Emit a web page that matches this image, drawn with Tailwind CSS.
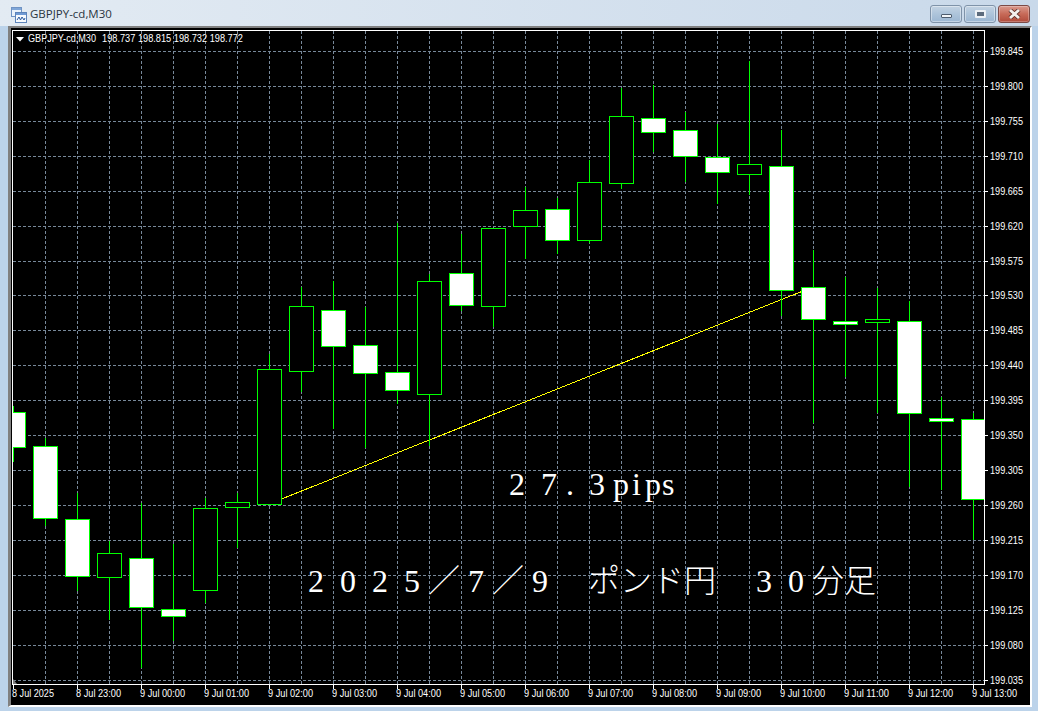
<!DOCTYPE html>
<html lang="ja">

<head>
    <meta charset="UTF-8">
    <title>GBPJPY-cd,M30</title>
    <script src="https://cdn.jsdelivr.net/npm/@tailwindcss/browser@4"></script>
</head>

<body class="bg-[#bcd3ea] overflow-hidden">

    <div class="w-[1038px] h-[711px] flex flex-col bg-[#bcd3ea]">

        <!-- Title bar -->
        <div class="h-[26px] flex items-start shrink-0 bg-gradient-to-r from-[#e3ebf3] to-[#c9d9ea]">
            <svg class="ml-[11px] mt-[7px] w-[16px] h-[16px]" viewBox="0 0 16 16">
                <rect x="0.5" y="0.5" width="10" height="9" fill="#eaf2fb" stroke="#6f93c4" />
                <rect x="1" y="1" width="9" height="2" fill="#7fa6d8" />
                <rect x="4.5" y="5.5" width="11" height="10" fill="#f7fafe" stroke="#5c83ba" />
                <rect x="5" y="6" width="10" height="2" fill="#6f9ad4" />
                <path d="M6 13 L8 10 L9.5 13 L11 10 L13 13 L14 11" fill="none" stroke="#2a5aa0" />
            </svg>
            <span class="ml-[3px] mt-[6px] text-[11.5px] leading-[16px] text-[#2a3440] font-['Open_Sans',sans-serif]">GBPJPY-cd,M30</span>

            <div class="ml-auto mr-[8px] mt-[5px] flex gap-[2px]">
                <div class="w-[32px] h-[18px] rounded-[3px] border border-[#7f93a9] bg-gradient-to-b from-[#c3d3e3] via-[#adc4da] to-[#9cb7d2] flex items-center justify-center shadow-[inset_0_0_0_1px_#ffffff66]">
                    <div class="w-[11px] h-[4px] mt-[4px] bg-[#f2f5f8] border border-[#4e5d6e] rounded-[1px]"></div>
                </div>
                <div class="w-[32px] h-[18px] rounded-[3px] border border-[#7f93a9] bg-gradient-to-b from-[#c3d3e3] via-[#adc4da] to-[#9cb7d2] flex items-center justify-center shadow-[inset_0_0_0_1px_#ffffff66]">
                    <div class="w-[11px] h-[8px] bg-[#5d6c7d] border-2 border-[#eef2f6] rounded-[1px]"></div>
                </div>
                <div class="w-[32px] h-[18px] rounded-[3px] border border-[#7c4a46] bg-gradient-to-b from-[#d99a8e] via-[#c76a58] to-[#b04a3a] flex items-center justify-center shadow-[inset_0_0_0_1px_#ffffff44]">
                    <svg class="w-[13px] h-[10px]" viewBox="0 0 13 10">
                        <path d="M2 1 L11 9 M11 1 L2 9" stroke="#5c2f2a" stroke-width="4.4" />
                        <path d="M2 1 L11 9 M11 1 L2 9" stroke="#f4f0ee" stroke-width="2.8" />
                    </svg>
                </div>
            </div>
        </div>

        <!-- Chart window, the svg uses screen coordinates through its viewBox -->
        <div class="ml-[8px] w-[1024px] h-[681px] border-t-2 border-l-[3px] border-t-[#808080] border-l-[#808080] border-r-2 border-b-2 border-r-white border-b-white bg-black">
            <svg id="chart" class="block bg-black" width="1019" height="677" viewBox="11 28 1019 677"></svg>
        </div>
    </div>

    <script>
        // center x comes from the index: 13 + 32 * i
        // [high, bodyTop, bodyBottom, low, filled]
        const candles = [
            [406, 412, 447, 462, 1],
            [438, 446, 518, 526, 1],
            [493, 519, 576, 591, 1],
            [541, 553, 577, 620, 0],
            [503, 558, 607, 668, 1],
            [544, 609, 616, 641, 1],
            [498, 508, 590, 603, 0],
            [493, 502, 507, 548, 0],
            [354, 369, 504, 505, 0],
            [287, 306, 371, 392, 0],
            [281, 310, 346, 429, 1],
            [307, 345, 373, 448, 1],
            [223, 372, 390, 404, 1],
            [274, 281, 394, 446, 0],
            [234, 273, 305, 311, 1],
            [228, 228, 306, 327, 0],
            [187, 210, 226, 259, 0],
            [198, 209, 240, 254, 1],
            [160, 182, 240, 243, 0],
            [88, 116, 183, 189, 0],
            [85, 118, 132, 152, 1],
            [112, 130, 156, 182, 1],
            [124, 157, 172, 204, 1],
            [61, 164, 174, 195, 0],
            [130, 166, 290, 316, 1],
            [250, 287, 319, 423, 1],
            [277, 321, 324, 377, 1],
            [288, 319, 322, 413, 0],
            [301, 321, 413, 487, 1],
            [397, 418, 421, 490, 1],
            [413, 419, 499, 540, 1],
        ];

        const prices = ['199.845', '199.800', '199.755', '199.710', '199.665', '199.620', '199.575', '199.530', '199.485', '199.440',
            '199.395', '199.350', '199.305', '199.260', '199.215', '199.170', '199.125', '199.080', '199.035'];
        const priceY = [51, 86, 121, 156, 191, 226, 261, 295, 330, 365, 400, 435, 470, 505, 540, 575, 610, 645, 680];

        const times = ['8 Jul 2025', '8 Jul 23:00', '9 Jul 00:00', '9 Jul 01:00', '9 Jul 02:00', '9 Jul 03:00', '9 Jul 04:00', '9 Jul 05:00',
            '9 Jul 06:00', '9 Jul 07:00', '9 Jul 08:00', '9 Jul 09:00', '9 Jul 10:00', '9 Jul 11:00', '9 Jul 12:00', '9 Jul 13:00'];

        let grid = '', ticks = '', labels = '', bars = '';

        priceY.forEach((y, i) => {
            grid += `<line x1="13" x2="984" y1="${y + .5}" y2="${y + .5}" />`;
            ticks += `<line x1="985" x2="988" y1="${y + .5}" y2="${y + .5}" />`;
            labels += `<text x="990" y="${y + 4}" textLength="33" lengthAdjust="spacingAndGlyphs">${prices[i]}</text>`;
        });

        for (let i = 1; i <= 30; i++) {
            const x = 13 + 32 * i;
            grid += `<line x1="${x + .5}" x2="${x + .5}" y1="31" y2="684" />`;
        }

        times.forEach((t, i) => {
            const x = 13 + 64 * i;
            ticks += `<line x1="${x + .5}" x2="${x + .5}" y1="685" y2="689" />`;
            labels += `<text x="${x - 1}" y="697" textLength="${i ? 45 : 42}" lengthAdjust="spacingAndGlyphs">${t}</text>`;
        });

        candles.forEach((c, i) => {
            const x = 13 + 32 * i;
            bars += `<line x1="${x + .5}" x2="${x + .5}" y1="${c[0]}" y2="${c[3]}" />`;
            bars += `<rect x="${x - 12 + .5}" y="${c[1] + .5}" width="24" height="${c[2] - c[1]}" class="${c[4] ? 'fill-white' : 'fill-black'}" />`;
        });

        document.getElementById('chart').innerHTML = `
            <defs><clipPath id="plot"><rect x="13" y="31" width="971" height="653" /></clipPath></defs>
            <g class="stroke-[#778899] [stroke-dasharray:3_2]" shape-rendering="crispEdges">${grid}</g>
            <line x1="269" y1="504" x2="813" y2="287" class="stroke-[#ffff00]" shape-rendering="crispEdges" />
            <g clip-path="url(#plot)" class="stroke-[#00ff00]" shape-rendering="crispEdges">${bars}</g>
            <g class="stroke-white" shape-rendering="crispEdges">
                <rect x="12.5" y="30.5" width="972" height="654" fill="none" />
                ${ticks}
            </g>
            <path d="M13 679 L17 684 L13 684 Z" class="fill-[#808080]" />
            <path d="M16 37 L24 37 L20 41.5 Z" class="fill-white" />
            <g class="fill-white text-[10px] font-['Liberation_Sans',sans-serif]">
                ${labels}
                <text x="28" y="42" textLength="68" lengthAdjust="spacingAndGlyphs">GBPJPY-cd,M30</text>
                <text x="102" y="42" textLength="141" lengthAdjust="spacingAndGlyphs">198.737 198.815 198.732 198.772</text>
            </g>
            <g class="fill-white text-[32px] font-['Liberation_Serif','Noto_Sans_CJK_JP',serif] font-light">
                <text x="509 541 566 589 613 632 645 662" y="495">27.3pips</text>
                <text x="308 340 372 404 428 468 492 532 588 620 652 684 756 788 812 844" y="592">2025／7／9ポンド円30分足</text>
            </g>`;
    </script>
</body>

</html>
